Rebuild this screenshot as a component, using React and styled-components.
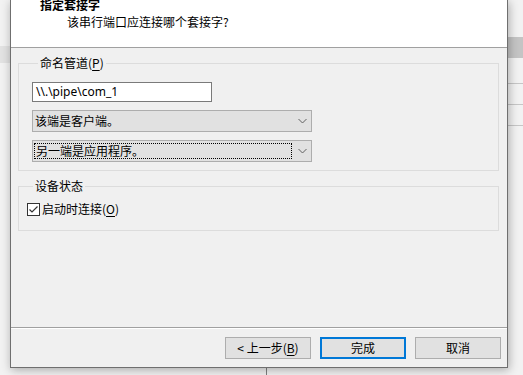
import React from 'react';
import styled, { createGlobalStyle } from 'styled-components';

const Global = createGlobalStyle`
  html, body { margin: 0; padding: 0; }
  body {
    width: 523px; height: 375px; overflow: hidden; background: #f0f0f0;
    font-family: "Microsoft YaHei UI", "Noto Sans CJK SC", "Noto Sans", sans-serif;
    font-size: 12px; color: #000;
  }
  * { box-sizing: border-box; }
`;

const Stage = styled.div`
  position: relative;
  width: 523px;
  height: 375px;
  overflow: hidden;
  background: #f2f2f2;
`;

/* pieces of the window behind the dialog */
const BackBand = styled.div`
  position: absolute;
  left: ${p => p.$left}px;
  top: ${p => p.$top}px;
  width: ${p => p.$w}px;
  height: ${p => p.$h}px;
  background: ${p => p.$bg};
`;

const BackGlyph = styled.span`
  position: absolute;
  left: -3px;
  top: 13px;
  font-size: 12px;
  line-height: 16px;
  color: #333;
`;

const Dialog = styled.div`
  position: absolute;
  left: 10px;
  top: 0;
  width: 498px;
  height: 368px;
  background: #f0f0f0;
  border: 1px solid #6f6f6f;
  border-top: none;
  box-shadow: 1px 2px 9px rgba(0, 0, 0, 0.3);
  display: flex;
  flex-direction: column;
`;

const Header = styled.div`
  height: 48px;
  background: #fff;
  border-bottom: 1px solid #a0a0a0;
  display: flex;
  flex-direction: column;
`;

const Title = styled.div`
  margin-top: -3px;
  padding-left: 29px;
  font-weight: bold;
  line-height: 16px;
`;

const Subtitle = styled.div`
  margin-top: 1px;
  padding-left: 56px;
  line-height: 16px;
`;

const Body = styled.div`
  flex: 1;
  padding: 7px 8px 0 7px;
  display: flex;
  flex-direction: column;
  gap: 7px;
`;

const Group = styled.fieldset`
  margin: 0;
  min-width: 0;
  border: 1px solid #dcdcdc;
  padding: ${p => p.$pad};
`;

const Legend = styled.legend`
  margin-left: 6px;
  padding: 0 2px;
  line-height: 16px;
  height: 16px;
`;

const Stack = styled.div`
  display: flex;
  flex-direction: column;
  gap: 8px;
`;

const Mn = styled.span`
  text-decoration: underline;
  text-underline-offset: 2px;
`;

const TextBox = styled.div`
  width: 180px;
  height: 20px;
  background: #fff;
  border: 1px solid #7a7a7a;
  padding-left: 3px;
  line-height: 18px;
  font-family: "Segoe UI", "Noto Sans", "Noto Sans CJK SC", sans-serif;
`;

const Combo = styled.div`
  width: 280px;
  height: 22px;
  background: #e1e1e1;
  border: 1px solid #adadad;
  display: flex;
  align-items: center;
  justify-content: space-between;
  padding: 0 4px 0 ${p => (p.$focused ? 1 : 2)}px;
  line-height: 16px;
`;

const FocusRect = styled.span`
  width: 258px;
  height: 16px;
  border: 1px dotted #000;
  padding-left: 1px;
  line-height: 14px;
`;

const Chevron = () => (
  <svg width="9" height="6" viewBox="0 0 9 6">
    <path d="M0.5 1 L4.5 5 L8.5 1" fill="none" stroke="#606060" strokeWidth="1" />
  </svg>
);

const CheckRow = styled.label`
  display: flex;
  align-items: flex-start;
  gap: 2px;
  height: 16px;
  line-height: 16px;
`;

const CheckBox = styled.span`
  width: 13px;
  height: 13px;
  margin-top: 2px;
  background: #fff;
  border: 1px solid #333;
  display: flex;
`;

const Footer = styled.div`
  border-top: 1px solid #a0a0a0;
  box-shadow: inset 0 1px 0 #fff;
  padding: 9px 6px 8px 0;
  display: flex;
  justify-content: flex-end;
  gap: 9px;
`;

const Button = styled.div`
  width: 86px;
  height: 22px;
  background: #e1e1e1;
  border: ${p => (p.$primary ? '2px solid #0078d7' : '1px solid #adadad')};
  display: flex;
  align-items: center;
  justify-content: center;
  line-height: 16px;
`;

export default function App() {
  return (
    <Stage>
      <Global />
      <BackBand $left={0} $top={46} $w={10} $h={17} $bg="#e2e2e2" />
      <BackGlyph>:</BackGlyph>
      <BackBand $left={508} $top={37} $w={15} $h={21} $bg="#c4c4c4" />
      <BackBand $left={508} $top={83} $w={15} $h={1} $bg="#c6c6c6" />
      <BackBand $left={508} $top={104} $w={15} $h={1} $bg="#c6c6c6" />
      <BackBand $left={508} $top={125} $w={15} $h={1} $bg="#c6c6c6" />
      <BackBand $left={266} $top={368} $w={1} $h={7} $bg="#808080" />

      <Dialog>
        <Header>
          <Title>指定套接字</Title>
          <Subtitle>该串行端口应连接哪个套接字?</Subtitle>
        </Header>
        <Body>
          <Group $pad="11px 0 8px 13px">
            <Legend>命名管道(<Mn>P</Mn>)</Legend>
            <Stack>
              <TextBox>\\.\pipe\com_1</TextBox>
              <Combo>
                <span>该端是客户端。</span>
                <Chevron />
              </Combo>
              <Combo $focused>
                <FocusRect>另一端是应用程序。</FocusRect>
                <Chevron />
              </Combo>
            </Stack>
          </Group>
          <Group $pad="7px 0 13px 8px">
            <Legend>设备状态</Legend>
            <CheckRow>
              <CheckBox>
                <svg width="11" height="11" viewBox="0 0 11 11">
                  <path d="M1.5 5.5 L4 8 L9.5 2.5" fill="none" stroke="#333" strokeWidth="1.2" />
                </svg>
              </CheckBox>
              <span>启动时连接(<Mn>O</Mn>)</span>
            </CheckRow>
          </Group>
        </Body>
        <Footer>
          <Button>&lt; 上一步(<Mn>B</Mn>)</Button>
          <Button $primary>完成</Button>
          <Button>取消</Button>
        </Footer>
      </Dialog>
    </Stage>
  );
}
